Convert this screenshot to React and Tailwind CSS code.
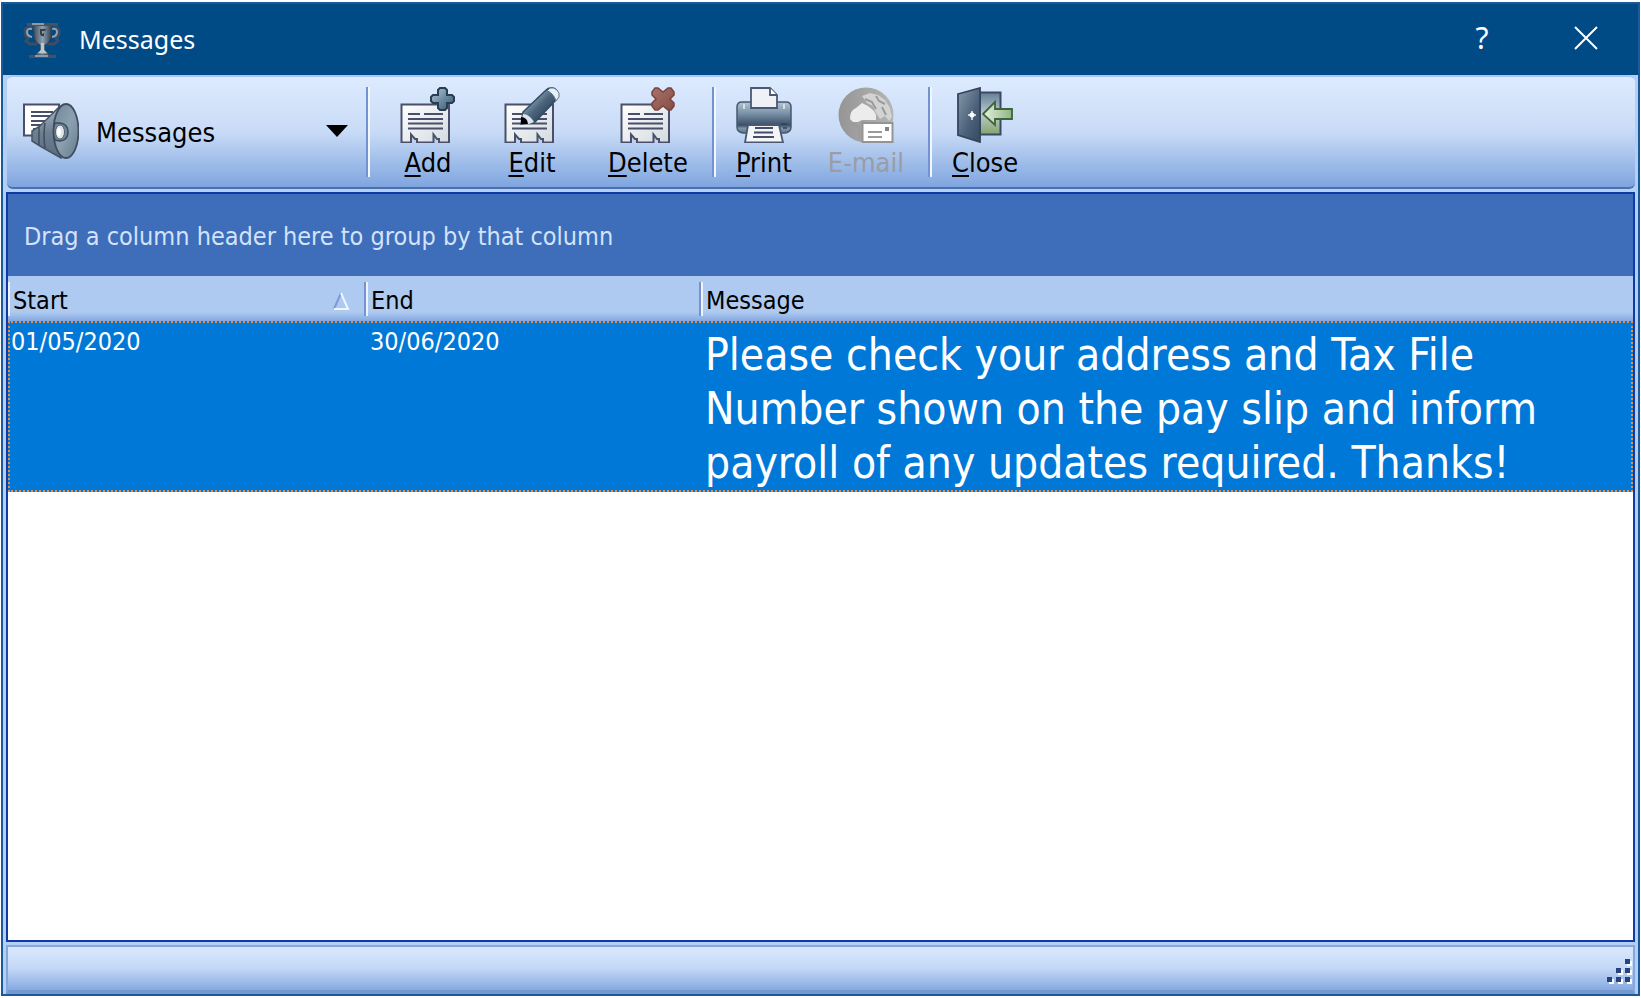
import { clsx } from "clsx";

const UI_FONT = "font-['DejaVu_Sans_Condensed','DejaVu_Sans',sans-serif]";

function TrophyIcon() {
  return (
    <svg viewBox="0 0 38 38" className="h-[38px] w-[38px]" aria-hidden="true">
      <defs>
        <linearGradient id="cup" x1="0" x2="1">
          <stop offset="0" stopColor="#3b4757" />
          <stop offset="0.5" stopColor="#8da0b0" />
          <stop offset="1" stopColor="#2f3b4b" />
        </linearGradient>
      </defs>
      <path d="M11 7H4q-2 0-2 4t3 6l-2 3 4 3h7M27 7h6q3 0 3 4t-3 6l2 3-4 3h-7" fill="none" stroke="#3e4d60" strokeWidth="3" />
      <path d="M9 8q-5-1-5 3t5 5M29 8q5-1 5 3t-5 5" fill="none" stroke="#93a4b2" strokeWidth="2" />
      <path d="M10 4h19l-1 12q-1 6-6 8v5l5 5H12l5-5v-5q-5-2-6-8z" fill="url(#cup)" stroke="#35404f" />
      <path d="M17 8h6l-1 2h-3v3l2-1v3q-3 1-4-2z" fill="#333d4c" />
      <path d="M18 22h3v7l3 3h-9l3-3z" fill="#b9c7d1" />
      <path d="M4 2h31v3H4zM6 34h27v3H6z" fill="#465262" />
      <path d="M9 3h12M12 35h13" stroke="#a8b3bb" strokeWidth="1.5" />
    </svg>
  );
}

function AnnounceIcon() {
  return (
    <svg viewBox="0 0 56 56" className="h-14 w-14 shrink-0" aria-hidden="true">
      <defs>
        <linearGradient id="cone" x1="0" y1="0" x2="0" y2="1">
          <stop offset="0" stopColor="#a4b3bf" />
          <stop offset="0.5" stopColor="#6d8091" />
          <stop offset="1" stopColor="#5a6c7d" />
        </linearGradient>
        <linearGradient id="bell" x1="0" y1="0" x2="1" y2="1">
          <stop offset="0" stopColor="#6f8798" />
          <stop offset="0.5" stopColor="#8ca1b0" />
          <stop offset="1" stopColor="#647c8e" />
        </linearGradient>
      </defs>
      <path d="M1 1.500h35v31H1z" fill="#fff" stroke="#4a4f69" strokeWidth="2" />
      <path d="M8 9h22M8 13h20M8 18h16M8 22h12M10 26h7" stroke="#4a4f69" strokeWidth="2" />
      <path d="M36 4 17 23 9 28v10l8 5 21 12z" fill="url(#cone)" stroke="#465468" strokeWidth="1.500" />
      <path d="M16 24v18M22 20q-2 12 0 25" stroke="#3f4d5f" strokeWidth="1.500" fill="none" />
      <ellipse cx="43" cy="28" rx="12.500" ry="27" fill="url(#bell)" stroke="#414e62" strokeWidth="1.800" />
      <path d="M32 20q-3 8 0 17l5 1q8-1 8-9t-8-9z" fill="#718797" stroke="#3d4b5e" strokeWidth="1.500" />
      <ellipse cx="37" cy="29" rx="4.500" ry="7" fill="#dfe5e9" stroke="#52616f" />
      <ellipse cx="36" cy="29" rx="2" ry="4" fill="#fff" />
    </svg>
  );
}

// Torn note shared by the add, edit and delete icons
function Note() {
  return (
    <>
      <defs>
        <linearGradient id="paper" x1="0" y1="0" x2="1" y2="1">
          <stop offset="0" stopColor="#fff" />
          <stop offset="1" stopColor="#d3dbe0" />
        </linearGradient>
      </defs>
      <path d="M1.500 17.500h47.500v38H39v-3.500h-2L33.500 47.500v8H17v-3.500H15L11 47.500v8H1.500z" fill="url(#paper)" stroke="#4b4f69" strokeWidth="2" />
      <path d="M8 27h12M24 27h19M8 32h35M8 36.500h35M8 41.500h35" stroke="#4b4f69" strokeWidth="2" />
    </>
  );
}

function AddIcon() {
  return (
    <svg viewBox="0 0 56 56" className="h-14 w-14" aria-hidden="true">
      <defs>
        <linearGradient id="plus" x1="0" y1="0" x2="1" y2="1">
          <stop offset="0" stopColor="#b9cad7" />
          <stop offset="0.5" stopColor="#6f8ca3" />
          <stop offset="1" stopColor="#38536b" />
        </linearGradient>
      </defs>
      <Note />
      <path d="M40 1h5l2 2v5h5l2 2v4l-2 2h-5v5l-2 2h-5l-2-2v-5h-5l-2-2v-4l2-2h5V3z" fill="url(#plus)" stroke="#263d52" strokeWidth="2" />
    </svg>
  );
}

function EditIcon() {
  return (
    <svg viewBox="0 0 56 56" className="h-14 w-14" aria-hidden="true">
      <defs>
        <linearGradient id="pencil" x1="0" y1="0" x2="1" y2="1">
          <stop offset="0.25" stopColor="#94abbd" />
          <stop offset="0.5" stopColor="#4b657d" />
          <stop offset="0.75" stopColor="#2c445c" />
        </linearGradient>
      </defs>
      <Note />
      <path d="M19 25 41 4q4-4 8-3t5 6q0 4-3 7L31 35l-14 2z" fill="url(#pencil)" stroke="#344b61" strokeWidth="1.500" />
      <path d="m43 4 3-3q4-1 7 2t2 7l-3 4q-1-4-4-7t-5-3z" fill="#e6eff5" stroke="#5d7488" />
      <path d="M19 27q4 0 7 3t4 5l-5 2-8-1z" fill="#dbe6ee" />
      <path d="M17 30v7h7q0-3-2-5t-5-2z" fill="#000" />
    </svg>
  );
}

function DeleteIcon() {
  return (
    <svg viewBox="0 0 56 56" className="h-14 w-14" aria-hidden="true">
      <defs>
        <linearGradient id="cross" x1="0" y1="0" x2="1" y2="1">
          <stop offset="0" stopColor="#a9746a" />
          <stop offset="1" stopColor="#844c45" />
        </linearGradient>
      </defs>
      <Note />
      <path d="M35 1h3l5 4 5-4h3l3 4v3l-4 4 4 4v3l-3 4h-3l-5-4-5 4h-3l-3-4v-3l4-4-4-4V5z" fill="url(#cross)" stroke="#7a443e" strokeWidth="1.500" />
    </svg>
  );
}

function PrintIcon() {
  return (
    <svg viewBox="0 0 56 56" className="h-14 w-14" aria-hidden="true">
      <defs>
        <linearGradient id="printer" x1="0" y1="0" x2="0" y2="1">
          <stop offset="0" stopColor="#b5c5d2" />
          <stop offset="0.35" stopColor="#7d94aa" />
          <stop offset="0.75" stopColor="#3a5068" />
          <stop offset="0.85" stopColor="#8195a8" />
          <stop offset="1" stopColor="#60768a" />
        </linearGradient>
      </defs>
      <path d="M1 20q0-5 5-5h44q5 0 5 5v20q0 5-6 6H7q-6-1-6-6z" fill="url(#printer)" stroke="#46596f" strokeWidth="1.500" />
      <path d="M15 21V1h19l7 7v13z" fill="#eef2f6" stroke="#4b5873" strokeWidth="1.800" />
      <path d="M34 1v7h7" fill="#fff" stroke="#4b5873" strokeWidth="1.800" />
      <path d="M8 17v5M48 17v5" stroke="#d4dee6" strokeWidth="2" />
      <path d="M12 38h31l4 17.500H9z" fill="#f3f5f7" stroke="#4b5873" strokeWidth="1.800" />
      <path d="M19 41h18M18 45.500h19M17 50h21" stroke="#454d68" strokeWidth="2" />
      <path d="M45 37h6M47 41h4" stroke="#2e4358" strokeWidth="1.500" />
    </svg>
  );
}

function EmailIcon() {
  return (
    <svg viewBox="0 0 56 56" className="h-14 w-14" aria-hidden="true">
      <defs>
        <linearGradient id="globe" x1="0" y1="0" x2="1" y2="0">
          <stop offset="0" stopColor="#959595" />
          <stop offset="1" stopColor="#b5b5b5" />
        </linearGradient>
      </defs>
      <circle cx="28" cy="28" r="27.500" fill="url(#globe)" />
      <path d="M12 32q0-9 6-11l6-5 6 3 6 5 2 4v5H24l-4 2-5 0z" fill="#ececec" />
      <path d="m24 9 8-3 8 2 7 5 5 8 2 9-3 4-4-5-5 3-4-6-3-7-6-3z" fill="#d3d3d3" />
      <path d="m27 12 7 3 4 7M38 9l3 5 6 3M44 20l4 8M13 36l8 4v12" fill="none" stroke="#9b9b9b" strokeWidth="2" />
      <path d="M24.500 36h30v19h-30z" fill="#fff" stroke="#949494" strokeWidth="2" />
      <path d="M30 45h14M30 50h14" stroke="#9a9a9a" strokeWidth="2" />
      <path d="M47 40h4v4h-4z" fill="#858585" />
    </svg>
  );
}

function CloseIcon() {
  return (
    <svg viewBox="0 0 56 56" className="h-14 w-14" aria-hidden="true">
      <defs>
        <linearGradient id="door" x1="0" y1="0" x2="1" y2="1">
          <stop offset="0" stopColor="#879aac" />
          <stop offset="0.6" stopColor="#4a6078" />
          <stop offset="1" stopColor="#344a61" />
        </linearGradient>
        <linearGradient id="opening" x1="0" y1="0" x2="0" y2="1">
          <stop offset="0" stopColor="#627e94" />
          <stop offset="0.5" stopColor="#bccbd0" />
          <stop offset="1" stopColor="#84a46c" />
        </linearGradient>
        <linearGradient id="arrow" x1="0" x2="1">
          <stop offset="0" stopColor="#e4f2dc" />
          <stop offset="1" stopColor="#90b486" />
        </linearGradient>
      </defs>
      <path d="M23 5.500h20.500v42H23z" fill="url(#opening)" stroke="#3c4863" strokeWidth="2" />
      <path d="M1 7 23 1v54L1 48z" fill="url(#door)" stroke="#34455c" strokeWidth="1.800" />
      <path d="M15 24v9M11 28h8" stroke="#b9d0e0" strokeWidth="2" />
      <circle cx="15" cy="28" r="2.500" fill="#fff" />
      <path d="M26 27 38 15v7h17v10H38v6z" fill="url(#arrow)" stroke="#3d6538" strokeWidth="1.800" />
    </svg>
  );
}

function Separator() {
  return <div className="h-[90px] w-1 shrink-0 border-r-2 border-l-2 border-r-[#f2f7ff] border-l-[#7392d2]" />;
}

function ToolButton({ icon, label, disabled }) {
  return (
    <button
      type="button"
      disabled={disabled}
      className={clsx("flex min-w-14 flex-col items-center text-[27px] leading-[40px]", disabled ? "text-[#9b9ca4]" : "text-black")}
    >
      {icon}
      <span>
        {disabled ? label : <><u className="underline decoration-2 underline-offset-3">{label[0]}</u>{label.slice(1)}</>}
      </span>
    </button>
  );
}

const messages = [
  {
    start: "01/05/2020",
    end: "30/06/2020",
    text: "Please check your address and Tax File Number shown on the pay slip and inform payroll of any updates required. Thanks!",
  },
];

function HeaderCell({ children, className, first }) {
  return (
    <th className={clsx("h-[45px] p-0 text-left font-normal", className)}>
      <div className={clsx("flex h-[34px]", !first && "border-l-2 border-[#7594d3]")}>
        <div className="flex flex-1 items-center border-l-2 border-white/80 pt-1 pl-[3px]">{children}</div>
      </div>
    </th>
  );
}

export default function App() {
  return (
    <div className={clsx("flex min-h-screen flex-col bg-white pt-0.5 pr-px pb-0.5 pl-px", UI_FONT)}>
      <div className="flex flex-1 flex-col border-2 border-[#1b5a98] bg-[#b4cff6]">
        <header className="flex h-[71px] items-center bg-[#004a86] pl-5 text-white">
          <TrophyIcon />
          <h1 className="ml-[18px] flex-1 font-['Noto_Sans',sans-serif] text-[25px]">Messages</h1>
          <button type="button" aria-label="Help" className="h-full w-[104px] pb-1 font-['Noto_Sans',sans-serif] text-[30px]">?</button>
          <button type="button" aria-label="Close window" className="flex h-full w-[104px] items-center justify-center pb-1">
            <svg viewBox="0 0 24 24" className="h-6 w-6" aria-hidden="true">
              <path d="M1 1 23 23M23 1 1 23" stroke="#fff" strokeWidth="2" />
            </svg>
          </button>
        </header>

        <div className="mr-[3px] ml-1 flex h-[114px] items-start rounded-md border-t-2 border-b-2 border-t-[#a9c6f5] border-b-[#4a70ae] bg-linear-to-b from-[#deebff] via-[#c8dbf6] to-[#7fa5df] pt-2.5">
          <button type="button" aria-haspopup="menu" className="mt-4 flex w-[359px] items-center pr-[18px] pl-4 text-[27px]">
            <AnnounceIcon />
            <span className="ml-[17px] flex-1 pt-1 text-left">Messages</span>
            <svg viewBox="0 0 22 12" className="h-3 w-[22px]" aria-hidden="true">
              <path d="M0 0h22L11 12z" />
            </svg>
          </button>
          <Separator />
          <div className="flex gap-12 pr-6 pl-[30px]">
            <ToolButton icon={<AddIcon />} label="Add" />
            <ToolButton icon={<EditIcon />} label="Edit" />
            <ToolButton icon={<DeleteIcon />} label="Delete" />
          </div>
          <Separator />
          <div className="flex gap-9 pr-6 pl-5">
            <ToolButton icon={<PrintIcon />} label="Print" />
            <ToolButton icon={<EmailIcon />} label="E-mail" disabled />
          </div>
          <Separator />
          <div className="flex pl-5">
            <ToolButton icon={<CloseIcon />} label="Close" />
          </div>
        </div>

        <main className="mx-[3px] mt-[3px] flex flex-1 flex-col border-2 border-[#103aa4] bg-white">
          <div className="flex h-[82px] items-center bg-[#3e6db9] pt-1 pl-4 text-[25px] text-[#d3e3fb]">
            Drag a column header here to group by that column
          </div>
          <table className="w-full table-fixed border-collapse text-[25px]">
            <thead>
              <tr className="bg-linear-to-b from-[#aecaf0] from-80% to-[#86a8e0] text-black">
                <HeaderCell first className="w-[356px]">
                  <span className="flex-1">Start</span>
                  <svg viewBox="0 0 18 20" className="mr-3.5 h-5 w-[18px]" aria-label="Sorted ascending">
                    <path d="M2 18 9 2" stroke="#7b9bd6" strokeWidth="2" />
                    <path d="m9 2 7 16H2" fill="none" stroke="#eef5ff" strokeWidth="2" />
                  </svg>
                </HeaderCell>
                <HeaderCell className="w-[335px]">End</HeaderCell>
                <HeaderCell>Message</HeaderCell>
              </tr>
            </thead>
            <tbody>
              {messages.map((m) => (
                <tr key={m.start} className="bg-[#0078d7] align-top text-white outline-2 -outline-offset-2 outline-dotted outline-[#f08a3c]">
                  <td className="h-[171px] p-0 pt-0.5 pl-[3px]">{m.start}</td>
                  <td className="p-0 pt-0.5 pl-[6px]">{m.end}</td>
                  <td className="p-0 pt-[7px] pr-20 pl-[6px] text-[44px] leading-[54px]">{m.text}</td>
                </tr>
              ))}
            </tbody>
          </table>
        </main>

        <footer className="mx-[3px] mt-[3px] flex h-[49px] items-end justify-end border-2 border-b-4 border-[#86a7db] border-b-[#7798cf] bg-linear-to-b from-[#dae8fd] via-[#c3d8f6] to-[#86a9e1] pb-1">
          <svg viewBox="0 0 28 28" className="h-7 w-7" aria-hidden="true">
            {[[20, 1], [11, 10], [20, 10], [2, 19], [11, 19], [20, 19]].map(([x, y]) => (
              <g key={`${x}-${y}`}>
                <rect x={x + 2} y={y + 2} width="5" height="5" fill="#fff" />
                <rect x={x} y={y} width="5" height="5" fill="#27427e" />
              </g>
            ))}
          </svg>
        </footer>
      </div>
    </div>
  );
}
